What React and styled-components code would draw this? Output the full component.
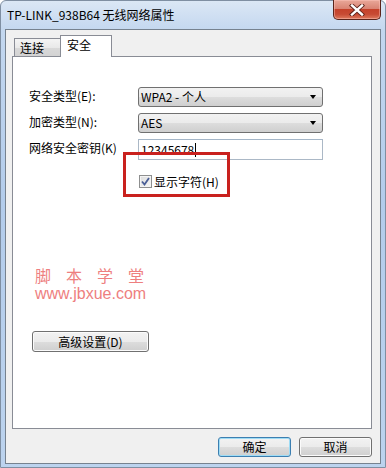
import React from 'react';
import styled, { createGlobalStyle } from 'styled-components';

const Global = createGlobalStyle`
  html, body { margin: 0; padding: 0; background: #ffffff; }
  body {
    width: 386px; height: 468px; overflow: hidden;
    font-family: "Noto Sans CJK SC", "DejaVu Sans", sans-serif;
    font-size: 12px; color: #000;
  }
  * { box-sizing: border-box; }
`;

const Window = styled.div`
  width: 386px;
  height: 468px;
  display: flex;
  flex-direction: column;
  padding: 0 4px 3px 4px;
  background: linear-gradient(to bottom, #dbe7f5 0px, #c3d7ef 30px, #b3cceb 200px, #bcd3ee 100%);
  border: 1px solid #7f8fa2;
  border-radius: 6px 6px 0 0;
`;

const TitleBar = styled.div`
  height: 28px;
  display: flex;
  align-items: flex-start;
  flex-shrink: 0;
`;

const Title = styled.div`
  padding: 6px 0 0 2px;
  font-family: "Noto Sans CJK SC", sans-serif;
  font-size: 12px;
  line-height: 16px;
  color: #000;
  white-space: nowrap;
`;

const CloseButton = styled.div`
  margin: -1px 0 0 auto;
  width: 48px;
  height: 20px;
  border: 1px solid #5a241b;
  border-top: none;
  border-radius: 0 0 5px 5px;
  background: linear-gradient(to bottom, #e9a899 0%, #d98474 45%, #c5422b 50%, #c74a33 75%, #de7a5e 100%);
  box-shadow: inset 0 0 0 1px rgba(255, 200, 190, 0.45);
  display: flex;
  align-items: center;
  justify-content: center;
`;

const Client = styled.div`
  flex: 1;
  display: flex;
  flex-direction: column;
  background: #f0f0f0;
  border: 1px solid #76828f;
  padding: 5px 8px 6px 6px;
`;

const TabRow = styled.div`
  height: 22px;
  display: flex;
  align-items: flex-end;
  padding-left: 2px;
  margin-bottom: -1px;
  position: relative;
  z-index: 1;
`;

const Tab = styled.div`
  height: ${p => (p.$active ? '22px' : '18px')};
  margin-bottom: ${p => (p.$active ? '0' : '1px')};
  width: ${p => (p.$active ? '52px' : '47px')};
  margin-left: ${p => (p.$active ? '-1px' : '0')};
  border: 1px solid #898c95;
  border-bottom: none;
  background: ${p => (p.$active ? '#ffffff' : 'linear-gradient(to bottom, #f4f4f4 0%, #e9e9e9 50%, #d9d9d9 51%, #d3d3d3 100%)')};
  padding: ${p => (p.$active ? '1px 0 0 6px' : '1px 0 0 5px')};
  font-size: 12px;
  line-height: 16px;
`;

const Panel = styled.div`
  position: relative;
  height: 373px;
  background: #ffffff;
  border: 1px solid #898c95;
  padding: 30px 0 0 16px;
  display: flex;
  flex-direction: column;
  align-items: flex-start;
`;

const Form = styled.div`
  display: grid;
  grid-template-columns: 109px 185px;
  grid-auto-rows: 20px;
  row-gap: 6px;
  align-items: center;
`;

const Label = styled.div`
  font-size: 12px;
  line-height: 16px;
  margin-top: -3px;
  white-space: nowrap;
`;

const Combo = styled.div`
  height: 20px;
  border: 1px solid #707070;
  border-radius: 3px;
  background: linear-gradient(to bottom, #f2f2f2 0%, #ebebeb 50%, #dddddd 51%, #cfcfcf 100%);
  display: flex;
  align-items: center;
  padding: 0 6px 0 2px;
  font-size: 12px;
  line-height: 16px;
`;

const ComboText = styled.span`
  flex: 1;
  font-family: "Noto Sans CJK SC", sans-serif;
`;

const Arrow = styled.span`
  width: 0;
  height: 0;
  border-left: 3.5px solid transparent;
  border-right: 3.5px solid transparent;
  border-top: 4px solid #000;
`;

const TextInput = styled.div`
  height: 21px;
  border: 1px solid #abb8c6;
  border-top-color: #a4b6c8;
  background: #ffffff;
  padding: 1px 0 0 2px;
  font-size: 12px;
  line-height: 16px;
  display: flex;
  align-items: center;
`;

const Caret = styled.span`
  display: inline-block;
  width: 1px;
  height: 14px;
  background: #000;
  margin-left: 1px;
`;

const CheckRow = styled.div`
  grid-column: 2;
  display: flex;
  align-items: center;
  margin-left: 1px;
  margin-top: 13px;
  height: 13px;
  font-size: 12px;
  line-height: 16px;
`;

const CheckBox = styled.div`
  width: 13px;
  height: 13px;
  border: 1px solid #8e8f8f;
  background: linear-gradient(135deg, #dcdcdc 0%, #f7f7f7 100%);
  box-shadow: inset 0 0 0 1px #f4f4f4;
  margin-right: 2px;
  display: flex;
  align-items: center;
  justify-content: center;
`;

const Highlight = styled.div`
  position: absolute;
  left: 110px;
  top: 95px;
  width: 107px;
  height: 45px;
  border: 3px solid #c9211e;
  pointer-events: none;
`;

const Watermark = styled.div`
  margin: 82px 0 0 6px;
  color: #ee7f7f;
`;

const WmTitle = styled.div`
  font-family: "Noto Sans CJK SC", sans-serif;
  font-size: 16px;
  line-height: 17px;
  letter-spacing: 15px;
`;

const WmUrl = styled.div`
  font-family: "Liberation Sans", Arial, sans-serif;
  font-size: 16px;
  line-height: 14px;
  margin-top: 3px;
`;

const Button = styled.div`
  width: ${p => p.$w || 73}px;
  height: ${p => p.$h || 20}px;
  border: 1px solid ${p => (p.$default ? '#3c7fb1' : '#707070')};
  border-radius: 3px;
  background: linear-gradient(to bottom, #f2f2f2 0%, #ebebeb 50%, #dddddd 51%, #cfcfcf 100%);
  box-shadow: ${p => (p.$default ? 'inset 0 0 0 1px #9fdcf5' : 'inset 0 0 0 1px #fbfbfb')};
  display: flex;
  align-items: center;
  justify-content: center;
  font-size: 12px;
  line-height: 16px;
  flex-shrink: 0;
`;

const AdvancedButton = styled(Button)`
  margin: 30px 0 0 3px;
`;

const ButtonRow = styled.div`
  display: flex;
  justify-content: flex-end;
  gap: 8px;
  margin-top: 8px;
`;

export default function App() {
  return (
    <>
      <Global />
      <Window>
        <TitleBar>
          <Title>TP-LINK_938B64 无线网络属性</Title>
          <CloseButton>
            <svg width="16" height="12" viewBox="0 0 16 12">
              <path d="M3 1.5 L13 10.5 M13 1.5 L3 10.5" stroke="#5b2118" strokeWidth="4.2" strokeLinecap="square" />
              <path d="M3 1.5 L13 10.5 M13 1.5 L3 10.5" stroke="#ffffff" strokeWidth="2.4" strokeLinecap="square" />
            </svg>
          </CloseButton>
        </TitleBar>
        <Client>
          <TabRow>
            <Tab>连接</Tab>
            <Tab $active>安全</Tab>
          </TabRow>
          <Panel>
            <Form>
              <Label>安全类型(E):</Label>
              <Combo>
                <ComboText>WPA2 - 个人</ComboText>
                <Arrow />
              </Combo>
              <Label>加密类型(N):</Label>
              <Combo>
                <ComboText>AES</ComboText>
                <Arrow />
              </Combo>
              <Label>网络安全密钥(K)</Label>
              <TextInput>
                12345678<Caret />
              </TextInput>
              <CheckRow>
                <CheckBox>
                  <svg width="9" height="9" viewBox="0 0 9 9">
                    <path d="M1 4.5 L3.5 7.5 L8 1" stroke="#4a5f97" strokeWidth="1.8" fill="none" />
                  </svg>
                </CheckBox>
                显示字符(H)
              </CheckRow>
            </Form>
            <Highlight />
            <Watermark>
              <WmTitle>脚本学堂</WmTitle>
              <WmUrl>www.jbxue.com</WmUrl>
            </Watermark>
            <AdvancedButton $w={117} $h={21}>高级设置(D)</AdvancedButton>
          </Panel>
          <ButtonRow>
            <Button $default>确定</Button>
            <Button>取消</Button>
          </ButtonRow>
        </Client>
      </Window>
    </>
  );
}
